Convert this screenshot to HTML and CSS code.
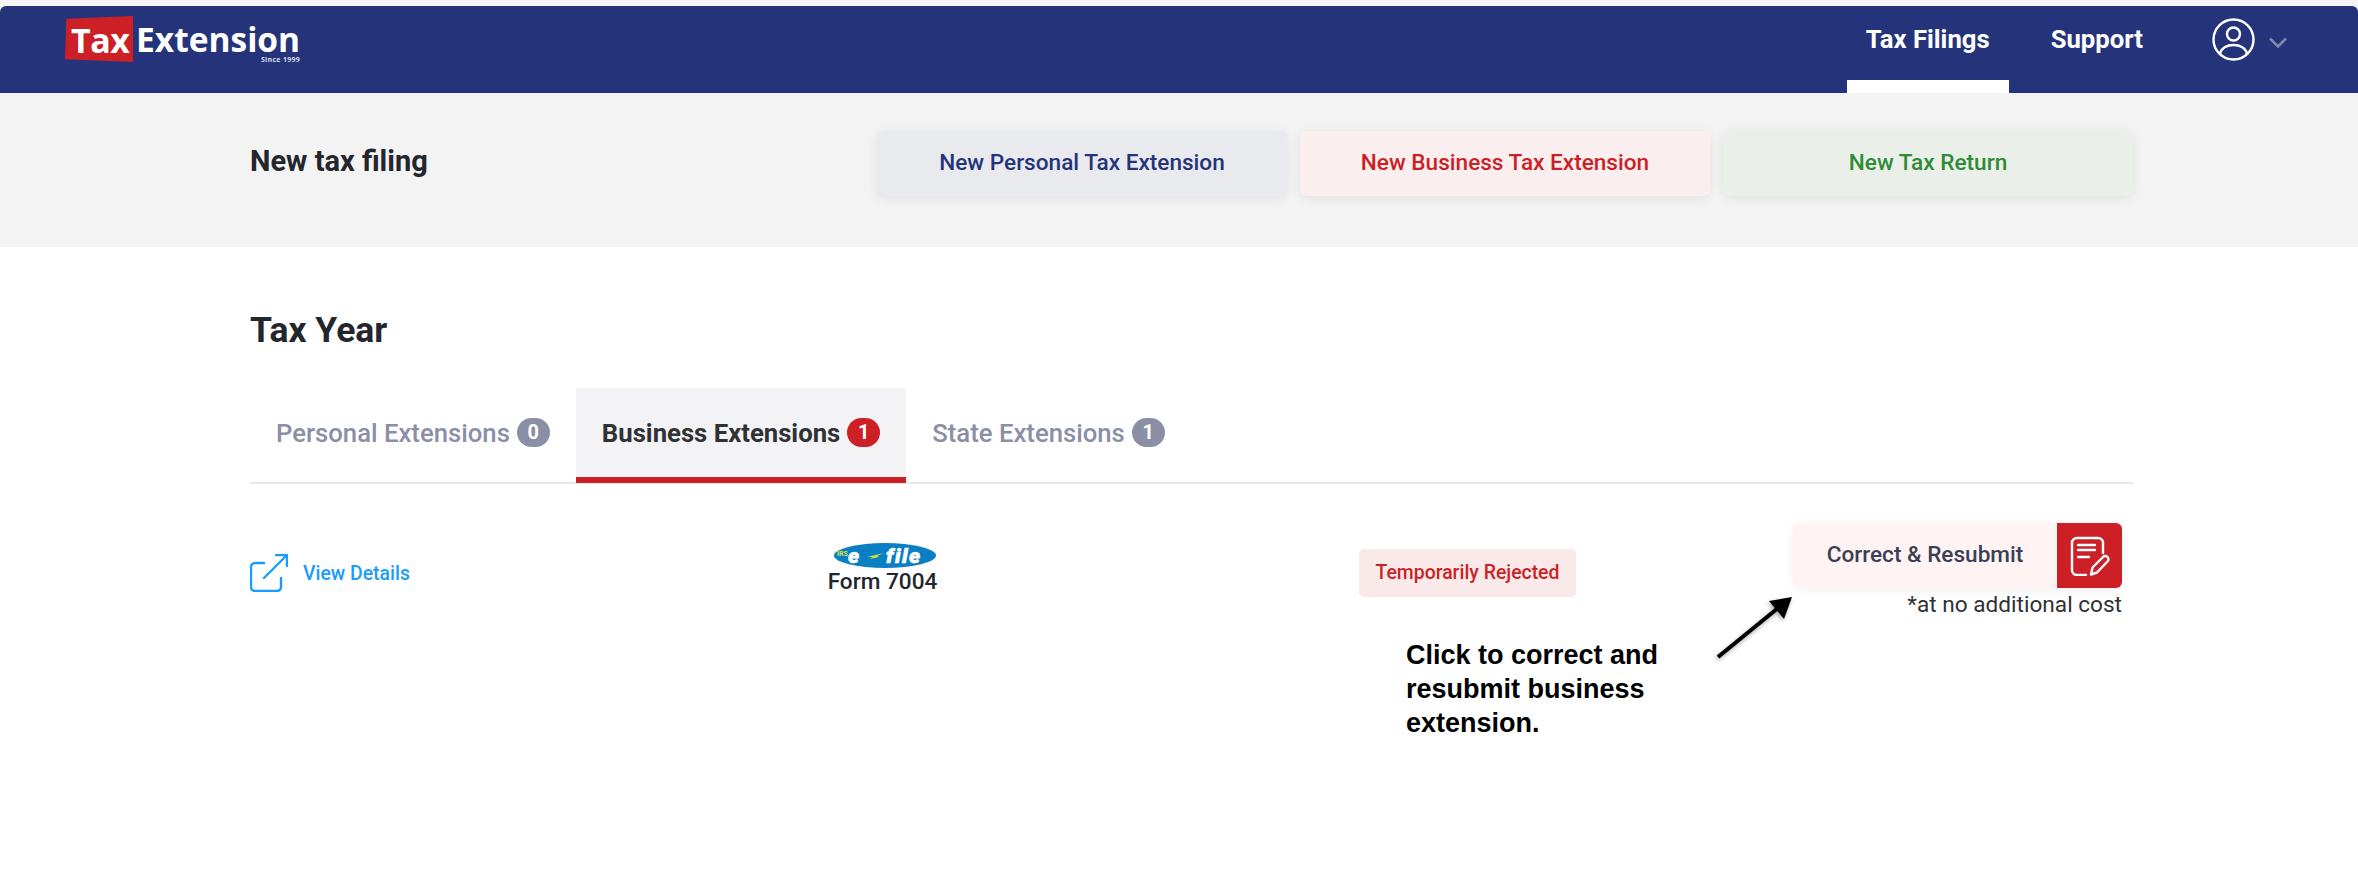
FILE: index.html
```html
<!DOCTYPE html>
<html lang="en">
<head>
  <meta charset="UTF-8">
  <title>Tax Filings</title>
  <link rel="stylesheet" href="styles.css">
</head>
<body>
  <div class="top-strip">
    <header class="header">
      <a class="logo">
        <span class="logo-tax">Tax</span>
        <span class="logo-name">Extension<small>Since 1999</small></span>
      </a>
      <nav class="nav">
        <a class="nav-item active">Tax Filings</a>
        <a class="nav-item">Support</a>
        <svg class="avatar" viewBox="0 0 43 43" fill="none" stroke="#fff" stroke-width="2.4">
          <circle cx="21.5" cy="21.5" r="20"/>
          <circle cx="21.5" cy="16" r="6.5"/>
          <path d="M8 36c1-6 7-9 13.500-9S34 30 35 36"/>
        </svg>
        <svg class="chevron" viewBox="0 0 18 11" fill="none" stroke="#7f88a8" stroke-width="2.6">
          <path d="M1 1.5l8 8 8-8"/>
        </svg>
      </nav>
    </header>
  </div>

  <section class="new-filing">
    <h2>New tax filing</h2>
    <div class="filing-buttons">
      <a class="filing-btn personal">New Personal Tax Extension</a>
      <a class="filing-btn business">New Business Tax Extension</a>
      <a class="filing-btn return">New Tax Return</a>
    </div>
  </section>

  <main class="main">
    <h1>Tax Year</h1>

    <div class="tabs">
      <a class="tab">Personal Extensions <span class="count">0</span></a>
      <a class="tab active">Business Extensions <span class="count">1</span></a>
      <a class="tab">State Extensions <span class="count">1</span></a>
    </div>

    <div class="row">
      <a class="view-details">
        <svg viewBox="0 0 38 38" fill="none" stroke="#1a9bff" stroke-width="2.4" stroke-linecap="round" stroke-linejoin="round">
          <path d="M14 9H5a4 4 0 0 0-4 4v20a4 4 0 0 0 4 4h22a4 4 0 0 0 4-4V24"/>
          <path d="M14 24L37 1M26 1h11v11"/>
        </svg>
        View Details
      </a>

      <div class="form-info">
        <svg class="efile" viewBox="0 0 102 25">
          <ellipse cx="51" cy="12.5" rx="51" ry="12.5" fill="#0b7fc3"/>
          <text x="3" y="13" class="efile-irs">IRS</text>
          <text x="14" y="19.500" class="efile-word">e</text>
          <path d="M33 14l17-4-7 3 2 1-9 2 3-2z" fill="#d8e23a"/>
          <text x="52" y="19.500" class="efile-word">file</text>
        </svg>
        <span>Form 7004</span>
      </div>

      <div class="status-cell">
        <span class="status">Temporarily Rejected</span>
      </div>

      <div class="action">
        <a class="resubmit">
          <span class="resubmit-label">Correct &amp; Resubmit</span>
          <span class="resubmit-icon">
            <svg viewBox="0 0 40 40" fill="none" stroke="#fff" stroke-width="2.4" stroke-linecap="round" stroke-linejoin="round">
              <path d="M33 17V7a5 5 0 0 0-5-5H7a5 5 0 0 0-5 5v27a5 5 0 0 0 5 5h9"/>
              <path d="M8 9h17M8 14h17M8 21h11"/>
              <path d="M21 38.500l1.500-7L33 21a3 3 0 0 1 4.500 4.500L27 36.500z"/>
            </svg>
          </span>
        </a>
        <p class="note">*at no additional cost</p>
      </div>
    </div>

    <svg class="callout-arrow" viewBox="0 0 84 70">
      <path d="M6 65L66 16" stroke="#000" stroke-width="4"/>
      <path d="M80 5L72 27 57 9z" fill="#000"/>
    </svg>
    <p class="callout">Click to correct and<br>resubmit business<br>extension.</p>
  </main>
</body>
</html>
```

FILE: styles.css
```css
* {
  margin: 0;
  padding: 0;
  box-sizing: border-box;
}

body {
  font-family: "Roboto", "Liberation Sans", sans-serif;
  background-color: #fff;
  color: #23262d;
}

a {
  text-decoration: none;
}

.top-strip {
  padding-top: 6px;
  background-color: #f5f5f5;
}

.header {
  display: flex;
  align-items: flex-start;
  justify-content: space-between;
  height: 87px;
  padding-left: 65px;
  background-color: #25347a;
  border-radius: 6px 6px 0 0;
}

.logo {
  display: flex;
  align-items: flex-start;
  margin-top: 10px;
  color: #fff;
  font-family: "Open Sans", "Noto Sans", sans-serif;
  font-weight: 700;
}

.logo-tax {
  width: 68px;
  height: 46px;
  padding: 2px 0 0 6px;
  font-size: 34px;
  line-height: 44px;
  letter-spacing: -0.5px;
  background-color: #cd1f26;
  clip-path: polygon(2% 6%, 100% 0, 100% 100%, 0 94%);
}

.logo-name {
  display: flex;
  flex-direction: column;
  margin: 5px 0 0 3px;
  font-size: 33.5px;
  line-height: 36px;
}

.logo-name small {
  font-size: 7px;
  line-height: 6px;
  text-align: right;
  letter-spacing: 0.3px;
  color: #d5d9ea;
}

.nav {
  display: flex;
  align-items: flex-start;
  padding-right: 71px;
}

.nav-item {
  height: 87px;
  padding-top: 15px;
  font-size: 25.7px;
  line-height: 36px;
  font-weight: 700;
  color: #fff;
}

.nav-item.active {
  width: 162px;
  margin-right: 42px;
  text-align: center;
  border-bottom: 13px solid #fff;
}

.avatar {
  width: 43px;
  height: 43px;
  margin: 12px 14px 0 69px;
}

.chevron {
  width: 18px;
  height: 11px;
  margin-top: 31px;
}

.new-filing {
  display: flex;
  align-items: center;
  justify-content: space-between;
  height: 154px;
  padding: 38px 225px 51px 250px;
  background-color: #f3f3f3;
}

.new-filing h2 {
  font-size: 29px;
  font-weight: 700;
  margin-top: -5px;
}

.filing-buttons {
  display: flex;
  gap: 13px;
}

.filing-btn {
  display: flex;
  align-items: center;
  justify-content: center;
  width: 410px;
  height: 65px;
  padding-bottom: 2px;
  font-size: 22.6px;
  font-weight: 500;
  border-radius: 6px;
  box-shadow: 0 2px 12px rgba(0, 0, 0, 0.08);
}

.filing-btn.personal {
  color: #25347a;
  background-color: #e9eaee;
}

.filing-btn.business {
  color: #cd1f26;
  background-color: #faefee;
}

.filing-btn.return {
  color: #2f8b36;
  background-color: #ebefea;
}

.main {
  position: relative;
  min-height: 633px;
  padding: 63px 225px 0 250px;
}

.main h1 {
  font-size: 35.5px;
  line-height: 40px;
  font-weight: 700;
}

.tabs {
  display: flex;
  margin-top: 38px;
  border-bottom: 2px solid #e5e8ec;
}

.tab {
  display: flex;
  align-items: center;
  gap: 7px;
  height: 95px;
  margin-bottom: -1px;
  padding: 0 26px 6px;
  font-size: 25.7px;
  font-weight: 500;
  color: #8a8fa6;
}

.tab.active {
  color: #2f3135;
  font-weight: 700;
  background-color: #f3f3f6;
  border-bottom: 6px solid #cd1f26;
  padding-bottom: 0;
}

.count {
  width: 33px;
  height: 29px;
  font-size: 20px;
  line-height: 29px;
  font-weight: 700;
  text-align: center;
  color: #fff;
  background-color: #8a8fa6;
  border-radius: 15px;
}

.tab.active .count {
  background-color: #cd1f26;
}

.row {
  display: grid;
  grid-template-columns: 578px 531px 1fr auto;
  align-items: start;
  padding: 39px 11px 0 0;
}

.view-details {
  display: flex;
  align-items: center;
  gap: 15px;
  margin-top: 31px;
  font-size: 19.4px;
  font-weight: 500;
  color: #1a9bff;
}

.view-details svg {
  width: 38px;
  height: 38px;
}

.form-info {
  display: flex;
  flex-direction: column;
  align-items: center;
  width: 109px;
  margin-top: 20px;
  font-size: 22.6px;
  line-height: 27px;
  font-weight: 500;
  white-space: nowrap;
}

.efile {
  display: block;
  width: 102px;
  height: 25px;
  margin-left: 5px;
}

.efile-irs {
  font-size: 7px;
  font-weight: 700;
  fill: #d8e23a;
}

.efile-word {
  font-size: 21px;
  font-weight: 900;
  font-style: italic;
  letter-spacing: 1.5px;
  fill: #fff;
  stroke: #fff;
  stroke-width: 0.6;
}

.status-cell {
  margin-top: 26px;
}

.status {
  display: inline-block;
  width: 217px;
  height: 48px;
  font-size: 19.4px;
  line-height: 48px;
  font-weight: 500;
  text-align: center;
  color: #cd1f26;
  background-color: #f9e9e9;
  border-radius: 5px;
}

.action {
  display: flex;
  flex-direction: column;
  align-items: flex-end;
}

.resubmit {
  display: flex;
  height: 65px;
  border-radius: 6px;
  box-shadow: 0 2px 12px rgba(0, 0, 0, 0.06);
}

.resubmit-label {
  display: flex;
  align-items: center;
  justify-content: center;
  width: 264px;
  padding-bottom: 2px;
  font-size: 22.6px;
  font-weight: 500;
  color: #3a3f55;
  background-color: #fff4f3;
  border-radius: 6px 0 0 6px;
}

.resubmit-icon {
  display: flex;
  align-items: center;
  justify-content: center;
  width: 65px;
  background-color: #cd1f26;
  border-radius: 0 6px 6px 0;
}

.resubmit-icon svg {
  width: 40px;
  height: 40px;
}

.note {
  margin-top: 5px;
  font-size: 22.6px;
  line-height: 24px;
  color: #2f3135;
}

.callout-arrow {
  position: absolute;
  left: 1712px;
  top: 345px;
  width: 84px;
  height: 70px;
  filter: drop-shadow(-1px 2px 2px rgba(0, 0, 0, 0.35));
}

.callout {
  position: absolute;
  left: 1406px;
  top: 391px;
  font-family: "Liberation Sans", Arial, sans-serif;
  font-size: 27px;
  line-height: 34px;
  font-weight: 700;
  color: #000;
}
```
